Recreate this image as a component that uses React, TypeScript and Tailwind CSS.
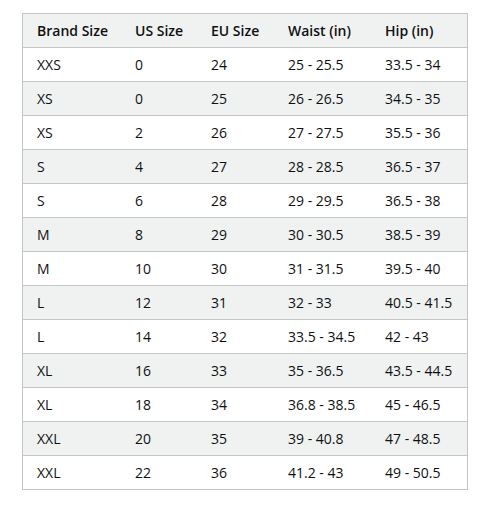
const headers = ["Brand Size", "US Size", "EU Size", "Waist (in)", "Hip (in)"];

const rows: string[][] = [
  ["XXS", "0", "24", "25 - 25.5", "33.5 - 34"],
  ["XS", "0", "25", "26 - 26.5", "34.5 - 35"],
  ["XS", "2", "26", "27 - 27.5", "35.5 - 36"],
  ["S", "4", "27", "28 - 28.5", "36.5 - 37"],
  ["S", "6", "28", "29 - 29.5", "36.5 - 38"],
  ["M", "8", "29", "30 - 30.5", "38.5 - 39"],
  ["M", "10", "30", "31 - 31.5", "39.5 - 40"],
  ["L", "12", "31", "32 - 33", "40.5 - 41.5"],
  ["L", "14", "32", "33.5 - 34.5", "42 - 43"],
  ["XL", "16", "33", "35 - 36.5", "43.5 - 44.5"],
  ["XL", "18", "34", "36.8 - 38.5", "45 - 46.5"],
  ["XXL", "20", "35", "39 - 40.8", "47 - 48.5"],
  ["XXL", "22", "36", "41.2 - 43", "49 - 50.5"],
];

const cols = "grid grid-cols-[98px_76px_77px_97px_96px]";

export default function App() {
  return (
    <div className="w-[488px] h-[506px] bg-white pt-[13px] pl-[22px] font-['Open_Sans',sans-serif] text-[14px] text-[#0f1111]">
      <div className="w-[446px] border border-[#c4c6c6]">
        {/* Header */}
        <div className={`${cols} h-[33px] items-center bg-[#f0f2f2] font-semibold`}>
          {headers.map((h) => (
            <div key={h} className="pl-[14px] whitespace-nowrap">{h}</div>
          ))}
        </div>
        {rows.map((r, i) => (
          <div
            key={i}
            className={`${cols} h-[34px] items-center border-t border-[#c4c6c6] ${i % 2 === 1 ? "bg-[#f0f2f2]" : "bg-white"}`}
          >
            {r.map((c, j) => (
              <div key={j} className="pl-[14px] whitespace-nowrap">{c}</div>
            ))}
          </div>
        ))}
      </div>
    </div>
  );
}
